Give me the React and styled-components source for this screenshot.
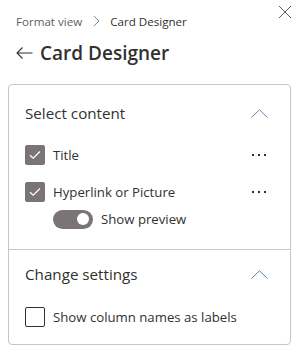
import React from 'react';
import styled, { createGlobalStyle } from 'styled-components';

const GlobalStyle = createGlobalStyle`
  body {
    margin: 0;
    background: #ffffff;
    font-family: "Open Sans", "Noto Sans", sans-serif;
    color: #323130;
  }
`;

const Panel = styled.div`
  width: 299px;
  height: 355px;
  box-sizing: border-box;
  position: relative;
  background: #fff;
`;

const Breadcrumb = styled.div`
  display: flex;
  align-items: center;
  gap: 9px;
  height: 20px;
  padding: 11px 0 0 16px;
  font-size: 11.6px;
  color: #605e5c;
  span.current {
    color: #323130;
  }
`;

const CloseButton = styled.button`
  position: absolute;
  top: 5px;
  right: 7px;
  width: 14px;
  height: 14px;
  padding: 0;
  border: none;
  background: none;
  display: flex;
`;

const TitleRow = styled.div`
  display: flex;
  align-items: center;
  gap: 7px;
  height: 32px;
  margin-top: 6px;
  padding-left: 16px;
  h1 {
    margin: 0;
    font-size: 19px;
    font-weight: 600;
    color: #323130;
  }
`;

const Card = styled.div`
  margin: 15px 8px 0;
  border: 1px solid #c8c6c4;
  border-radius: 4px;
`;

const Section = styled.div`
  padding: ${p => p.$top}px 16px ${p => p.$bottom}px;
  border-top: ${p => (p.$divided ? '1px solid #c8c6c4' : 'none')};
`;

const SectionHeader = styled.div`
  display: flex;
  align-items: center;
  justify-content: space-between;
  height: 32px;
  font-size: 15.2px;
  color: #323130;
  padding-right: 6px;
`;

const ItemRow = styled.div`
  display: flex;
  align-items: center;
  height: 20px;
  margin-top: ${p => p.$gap}px;
  padding-right: 8px;
`;

const Box = styled.span`
  width: 20px;
  height: 20px;
  box-sizing: border-box;
  border-radius: 2px;
  border: 1px solid ${p => (p.$checked ? '#7a7574' : '#323130')};
  background: ${p => (p.$checked ? '#7a7574' : '#fff')};
  display: flex;
  align-items: center;
  justify-content: center;
  flex: none;
`;

const Label = styled.span`
  margin-left: 8px;
  font-size: 13.2px;
  color: #323130;
  flex: 1;
`;

const More = styled.span`
  display: flex;
  gap: 4px;
  i {
    width: 2px;
    height: 2px;
    background: #323130;
  }
`;

const ToggleRow = styled.div`
  display: flex;
  align-items: center;
  margin: 7px 0 0 28px;
  height: 20px;
`;

const Toggle = styled.span`
  width: 40px;
  height: 19px;
  border-radius: 10px;
  background: #7a7574;
  display: flex;
  align-items: center;
  justify-content: flex-end;
  padding-right: 4px;
  box-sizing: border-box;
  &::after {
    content: '';
    width: 12px;
    height: 12px;
    border-radius: 50%;
    background: #fff;
  }
`;

const Chevron = () => (
  <svg width="17" height="9" viewBox="0 0 17 9">
    <path d="M0.5 8.5 L8.5 0.8 L16.5 8.5" fill="none" stroke="#5b84b1" strokeWidth="1" />
  </svg>
);

const Check = () => (
  <svg width="12" height="10" viewBox="0 0 12 10">
    <path d="M1 5.2 L4.2 8.2 L11 1.5" fill="none" stroke="#fff" strokeWidth="1.2" />
  </svg>
);

const Item = ({ label, checked, more, gap }) => (
  <ItemRow $gap={gap}>
    <Box $checked={checked}>{checked && <Check />}</Box>
    <Label>{label}</Label>
    {more && (
      <More>
        <i />
        <i />
        <i />
      </More>
    )}
  </ItemRow>
);

const App = () => (
  <Panel>
    <GlobalStyle />
    <Breadcrumb>
      <span>Format view</span>
      <svg width="10" height="12" viewBox="0 0 10 12">
        <path d="M3 1 L8 6 L3 11" fill="none" stroke="#8a8886" strokeWidth="1" />
      </svg>
      <span className="current">Card Designer</span>
    </Breadcrumb>
    <CloseButton aria-label="Close">
      <svg width="14" height="14" viewBox="0 0 14 14">
        <path d="M1 1 L13 13 M13 1 L1 13" stroke="#605e5c" strokeWidth="1" />
      </svg>
    </CloseButton>
    <TitleRow>
      <svg width="17" height="12" viewBox="0 0 17 12">
        <path d="M16.5 6 H1 M6.5 0.5 L1 6 L6.5 11.5" fill="none" stroke="#323130" strokeWidth="1.1" />
      </svg>
      <h1>Card Designer</h1>
    </TitleRow>
    <Card>
      <Section $top={12} $bottom={20}>
        <SectionHeader>
          Select content
          <Chevron />
        </SectionHeader>
        <Item label="Title" checked more gap={16} />
        <Item label="Hyperlink or Picture" checked more gap={17} />
        <ToggleRow>
          <Toggle />
          <Label>Show preview</Label>
        </ToggleRow>
      </Section>
      <Section $top={8} $bottom={17} $divided>
        <SectionHeader>
          Change settings
          <Chevron />
        </SectionHeader>
        <Item label="Show column names as labels" gap={17} />
      </Section>
    </Card>
  </Panel>
);

export default App;
